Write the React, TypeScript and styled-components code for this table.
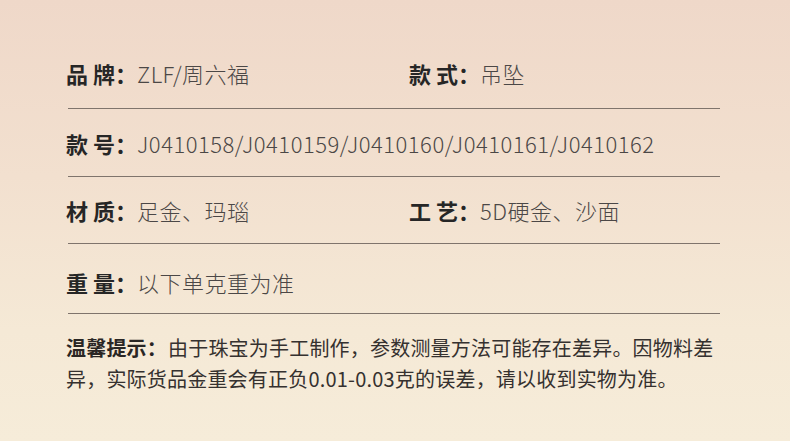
import React from 'react';
import styled, { createGlobalStyle } from 'styled-components';

const GlobalStyle = createGlobalStyle`
  html, body {
    margin: 0;
    padding: 0;
  }
  body {
    font-family: "Noto Sans CJK SC", "Noto Sans", sans-serif;
    background: #f3e4d2;
  }
`;

interface Field {
  name: string;
  value: string;
}

interface Spec {
  fields: Field[];
  height: number;
  shift: number;
}

const specs: Spec[] = [
  { fields: [{ name: '品 牌', value: 'ZLF/周六福' }, { name: '款 式', value: '吊坠' }], height: 67, shift: -3 },
  { fields: [{ name: '款 号', value: 'J0410158/J0410159/J0410160/J0410161/J0410162' }], height: 67, shift: 0 },
  { fields: [{ name: '材 质', value: '足金、玛瑙' }, { name: '工 艺', value: '5D硬金、沙面' }], height: 66, shift: 0 },
  { fields: [{ name: '重 量', value: '以下单克重为准' }], height: 69, shift: 6 },
];

const Page = styled.div`
  width: 790px;
  height: 441px;
  box-sizing: border-box;
  padding: 41px 0 0 66px;
  background: linear-gradient(180deg, #efd8c9 0%, #f2e0cf 40%, #f5e9d6 75%, #f6ecd9 100%);
  overflow: hidden;
`;

const Row = styled.div<{ $h: number; $shift: number }>`
  display: grid;
  grid-template-columns: 343px 1fr;
  align-items: center;
  box-sizing: border-box;
  height: ${(p) => p.$h}px;
  padding-top: ${(p) => (p.$shift > 0 ? p.$shift : 0)}px;
  padding-bottom: ${(p) => (p.$shift < 0 ? -p.$shift : 0)}px;
`;

const Item = styled.div`
  display: flex;
  align-items: baseline;
  white-space: nowrap;
`;

const Label = styled.span`
  font-size: 22px;
  font-weight: 700;
  color: #262626;
`;

const Value = styled.span`
  font-size: 22px;
  font-weight: 300;
  letter-spacing: 0.5px;
  color: #4b4746;
`;

const Divider = styled.div`
  width: 652px;
  height: 1px;
  margin-left: 2px;
  background: #7f746c;
`;

const Note = styled.p`
  margin: 18px 0 0;
  width: 662px;
  font-size: 20px;
  line-height: 31px;
  letter-spacing: 0.2px;
  color: #35312f;
`;

const NoteTitle = styled.strong`
  display: inline-block;
  margin-right: 1px;
  font-weight: 700;
  color: #2a2624;
`;

const App: React.FC = () => (
  <Page>
    <GlobalStyle />
    {specs.map((spec, i) => (
      <React.Fragment key={i}>
        <Row $h={spec.height} $shift={spec.shift}>
          {spec.fields.map((f) => (
            <Item key={f.name}>
              <Label>{f.name}：</Label>
              <Value>{f.value}</Value>
            </Item>
          ))}
        </Row>
        <Divider />
      </React.Fragment>
    ))}
    <Note>
      <NoteTitle>温馨提示：</NoteTitle>由于珠宝为手工制作，参数测量方法可能存在差异。因物料差异，实际货品金重会有正负0.01-0.03克的误差，请以收到实物为准。
    </Note>
  </Page>
);

export default App;
